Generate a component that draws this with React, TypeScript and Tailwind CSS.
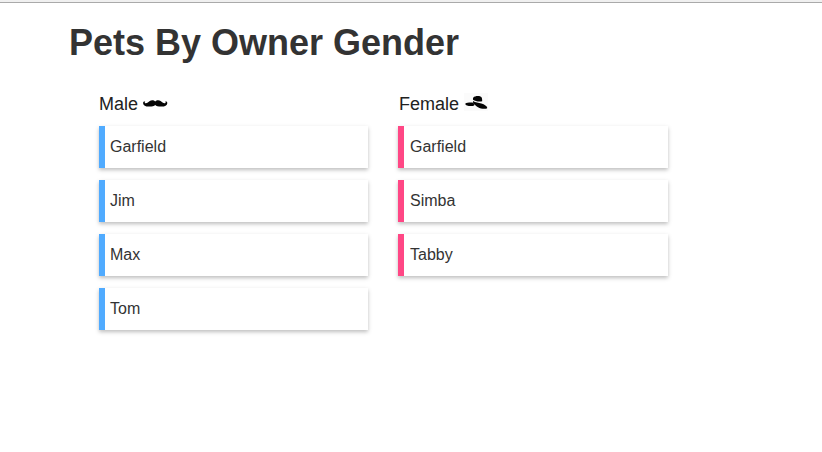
const Mustache = () => (
  <svg width="25" height="18" viewBox="0 0 25 18" className="ml-[5px]" fill="#050505">
    <path d="M12.200 6.600C11 5 8.500 4.700 6.800 6C5.300 7.200 4 8.500 2.400 8.200C1.600 8 1.500 7.200 2.200 6.700C1 6.200 0 7 .1 8.200C.3 10.800 3 11.800 6.500 11.600C9 11.500 11.300 11 12.200 9.900C13.100 11 15.400 11.500 17.900 11.600C21.400 11.800 24.100 10.800 24.300 8.200C24.400 7 23.400 6.200 22.200 6.700C22.900 7.200 22.800 8 22 8.200C20.400 8.500 19.100 7.200 17.600 6C15.900 4.700 13.400 5 12.200 6.600Z" />
  </svg>
);

const Hat = () => (
  <svg width="24" height="18" viewBox="0 0 24 18" className="mb-[4px] ml-[5px] bg-[#fbfbfb]" fill="#050505">
    <path d="M9 6.700C8.700 4.800 9.500 3.500 11.200 3.400C13 3 15 3 16.400 3.500C17.900 4 18.200 5.700 18.200 8.200C15.500 8.700 11.500 8.600 9 6.700Z" />
    <path d="M1.200 10.700C3 9.500 6.500 9.500 9.200 9.700L10.600 11.200C10.500 12.700 9 13.200 6.800 13.100C4.200 13 1.300 12.500 1.200 10.700Z" />
    <path d="M9 8C11.500 9.600 14.500 9.700 17.400 10.400C20.500 11.300 23 13 23.300 14.900C21.500 16.500 17 15.800 14 14.200C11.800 13 10.200 11 9 9.500Z" />
  </svg>
);

const groups = [
  { label: "Male", Icon: Mustache, width: "w-[269px]", heading: "", item: "border-[#50abff] pl-[5px]", pets: ["Garfield", "Jim", "Max", "Tom"] },
  { label: "Female", Icon: Hat, width: "w-[270px]", heading: "pl-px", item: "border-[#ff4785] pl-[6px]", pets: ["Garfield", "Simba", "Tabby"] },
];

export default function App() {
  return (
    <main className="h-[452px] w-full overflow-hidden bg-white font-['Liberation_Sans',Arial,sans-serif] text-[#333333]">
      <div className="h-[3px] border-b border-[#aaaaaa] bg-[#f0f0f0]" />
      <h1 className="pt-[18px] pl-[69px] text-[36px] leading-[44px] font-bold">Pets By Owner Gender</h1>
      <div className="flex gap-[30px] pt-[27px] pl-[99px]">
        {groups.map(({ label, Icon, width, heading, item, pets }) => (
          <section key={label} className={width}>
            <h2 className={`flex h-[24px] items-center text-[18px] text-[#212121] ${heading}`}>{label}<Icon /></h2>
            <ul className="mt-[10px] flex flex-col gap-3">
              {pets.map((pet) => (
                <li key={pet} className={`h-[42px] border-l-[6px] text-[16px] leading-[42px] shadow-[0_2px_4px_0_rgba(0,0,0,0.26)] ${item}`}>{pet}</li>
              ))}
            </ul>
          </section>
        ))}
      </div>
    </main>
  );
}
